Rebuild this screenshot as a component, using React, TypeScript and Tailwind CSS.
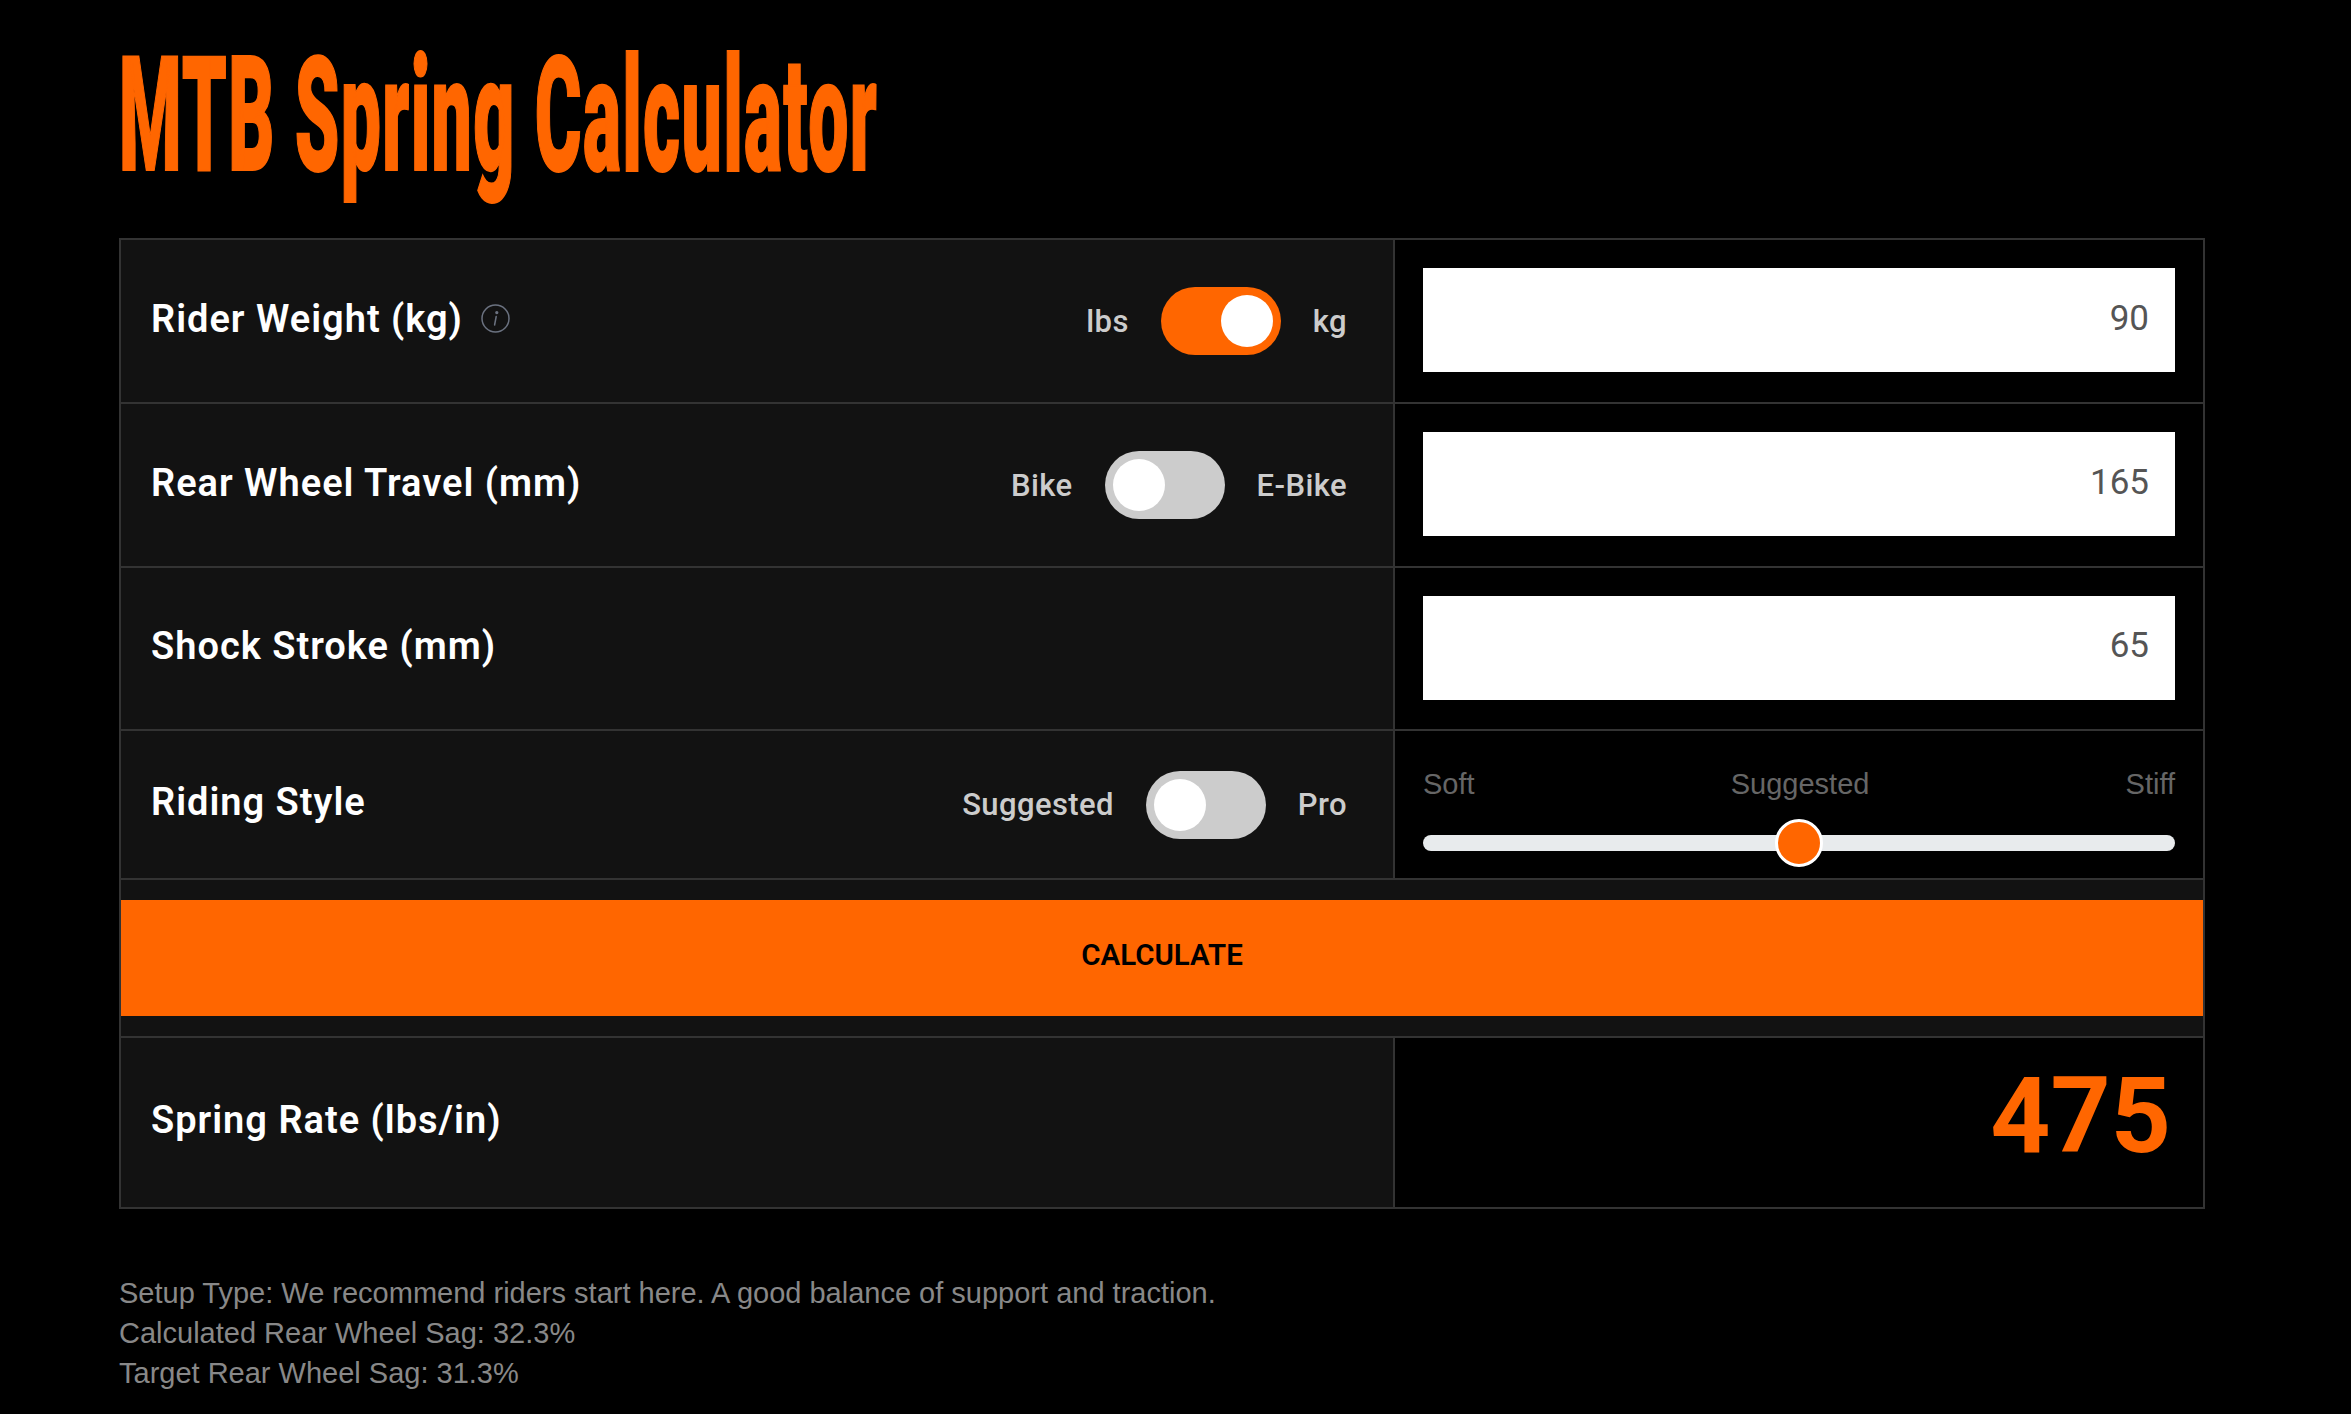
const labelFont = "font-['Roboto',sans-serif] text-[38px] font-semibold leading-none tracking-[1px] text-white"

function Toggle({ left, right, on }: { left: string; right: string; on?: boolean }) {
  return (
    <div className="flex items-center gap-[32px] font-['Roboto',sans-serif] text-[31px] font-medium leading-none tracking-[0.4px] text-[#cccccc]">
      <span>{left}</span>
      <div className={`flex h-[68px] w-[120px] items-center rounded-full px-[8px] ${on ? 'justify-end bg-[#ff6600]' : 'justify-start bg-[#cccccc]'}`}>
        <div className="h-[52px] w-[52px] rounded-full bg-white" />
      </div>
      <span>{right}</span>
    </div>
  )
}

function InfoIcon() {
  return (
    <svg width="29" height="29" viewBox="0 0 29 29" fill="none" stroke="#6b7280" strokeWidth="1.5">
      <circle cx="14.5" cy="14.5" r="13.5" />
      <path d="M15.2 12.5 L13.6 21" strokeLinecap="round" />
      <circle cx="15.8" cy="8.6" r="0.9" fill="#6b7280" />
    </svg>
  )
}

function Row({ label, info, toggle, value, height }: { label: string; info?: boolean; toggle?: React.ReactNode; value?: string; height: string }) {
  return (
    <div className={`flex border-b-2 border-[#333333] ${height}`}>
      <div className="flex w-[1274px] items-center justify-between border-r-2 border-[#333333] bg-[#121212] pl-[30px] pr-[46px]">
        <div className="flex items-center gap-[18px] pb-[5px]">
          <span className={labelFont}>{label}</span>
          {info && <InfoIcon />}
        </div>
        {toggle}
      </div>
      <div className="flex flex-1 items-center bg-black px-[28px] pb-[2px]">
        {value && (
          <input
            readOnly
            value={value}
            className="h-[104px] w-full bg-white pl-[26px] pr-[26px] pb-[4px] text-right font-['Roboto',sans-serif] text-[35px] text-[#555555] outline-none"
          />
        )}
      </div>
    </div>
  )
}

export default function App() {
  return (
    <div className="min-h-screen bg-black pl-[119px] font-['Liberation_Sans',sans-serif]">
      <div className="h-[238px] pt-[36px]">
        <h1 className="inline-block origin-left scale-x-[0.446] whitespace-nowrap font-['Roboto',sans-serif] text-[160px] font-black leading-none tracking-[3px] text-[#ff6600] [-webkit-text-stroke:2px_#ff6600]">
          MTB Spring Calculator
        </h1>
      </div>

      <div className="w-[2086px] border-2 border-[#333333]">
        <Row
          height="h-[164px]"
          label="Rider Weight (kg)"
          info
          toggle={<Toggle left="lbs" right="kg" on />}
          value="90"
        />
        <Row
          height="h-[164px]"
          label="Rear Wheel Travel (mm)"
          toggle={<Toggle left="Bike" right="E-Bike" />}
          value="165"
        />
        <Row height="h-[163px]" label="Shock Stroke (mm)" value="65" />

        {/* Riding style has the slider on the right */}
        <div className="flex h-[149px] border-b-2 border-[#333333]">
          <div className="flex w-[1274px] items-center justify-between border-r-2 border-[#333333] bg-[#121212] pl-[30px] pr-[46px]">
            <span className={`${labelFont} pb-[5px]`}>Riding Style</span>
            <Toggle left="Suggested" right="Pro" />
          </div>
          <div className="flex flex-1 flex-col bg-black px-[28px] pt-[39px]">
            <div className="flex justify-between text-[29px] leading-none text-[#666666]">
              <span>Soft</span>
              <span>Suggested</span>
              <span>Stiff</span>
            </div>
            <div className="relative mt-[36px] h-[16px] rounded-full bg-[#e8ebed]">
              <div className="absolute left-1/2 top-1/2 h-[48px] w-[48px] -translate-x-1/2 -translate-y-1/2 rounded-full border-[3px] border-white bg-[#ff6600]" />
            </div>
          </div>
        </div>

        <div className="border-b-2 border-[#333333] bg-[#121212] pt-[20px] pb-[20px]">
          <button className="flex h-[116px] w-full items-center justify-center bg-[#ff6600] pb-[6px] font-['Roboto',sans-serif] text-[29.5px] font-semibold text-black">
            CALCULATE
          </button>
        </div>

        <div className="flex h-[169px]">
          <div className="flex w-[1274px] items-center border-r-2 border-[#333333] bg-[#121212] pl-[30px] pb-[5px]">
            <span className={labelFont}>Spring Rate (lbs/in)</span>
          </div>
          <div className="flex flex-1 items-center justify-end bg-black pr-[32px] pb-[12px] font-['Roboto',sans-serif] text-[105px] font-bold leading-none text-[#ff6600]">
            475
          </div>
        </div>
      </div>

      <div className="mt-[64px] text-[29px] leading-[40px] text-[#888888]">
        <p>Setup Type: We recommend riders start here. A good balance of support and traction.</p>
        <p>Calculated Rear Wheel Sag: 32.3%</p>
        <p>Target Rear Wheel Sag: 31.3%</p>
      </div>
    </div>
  )
}
